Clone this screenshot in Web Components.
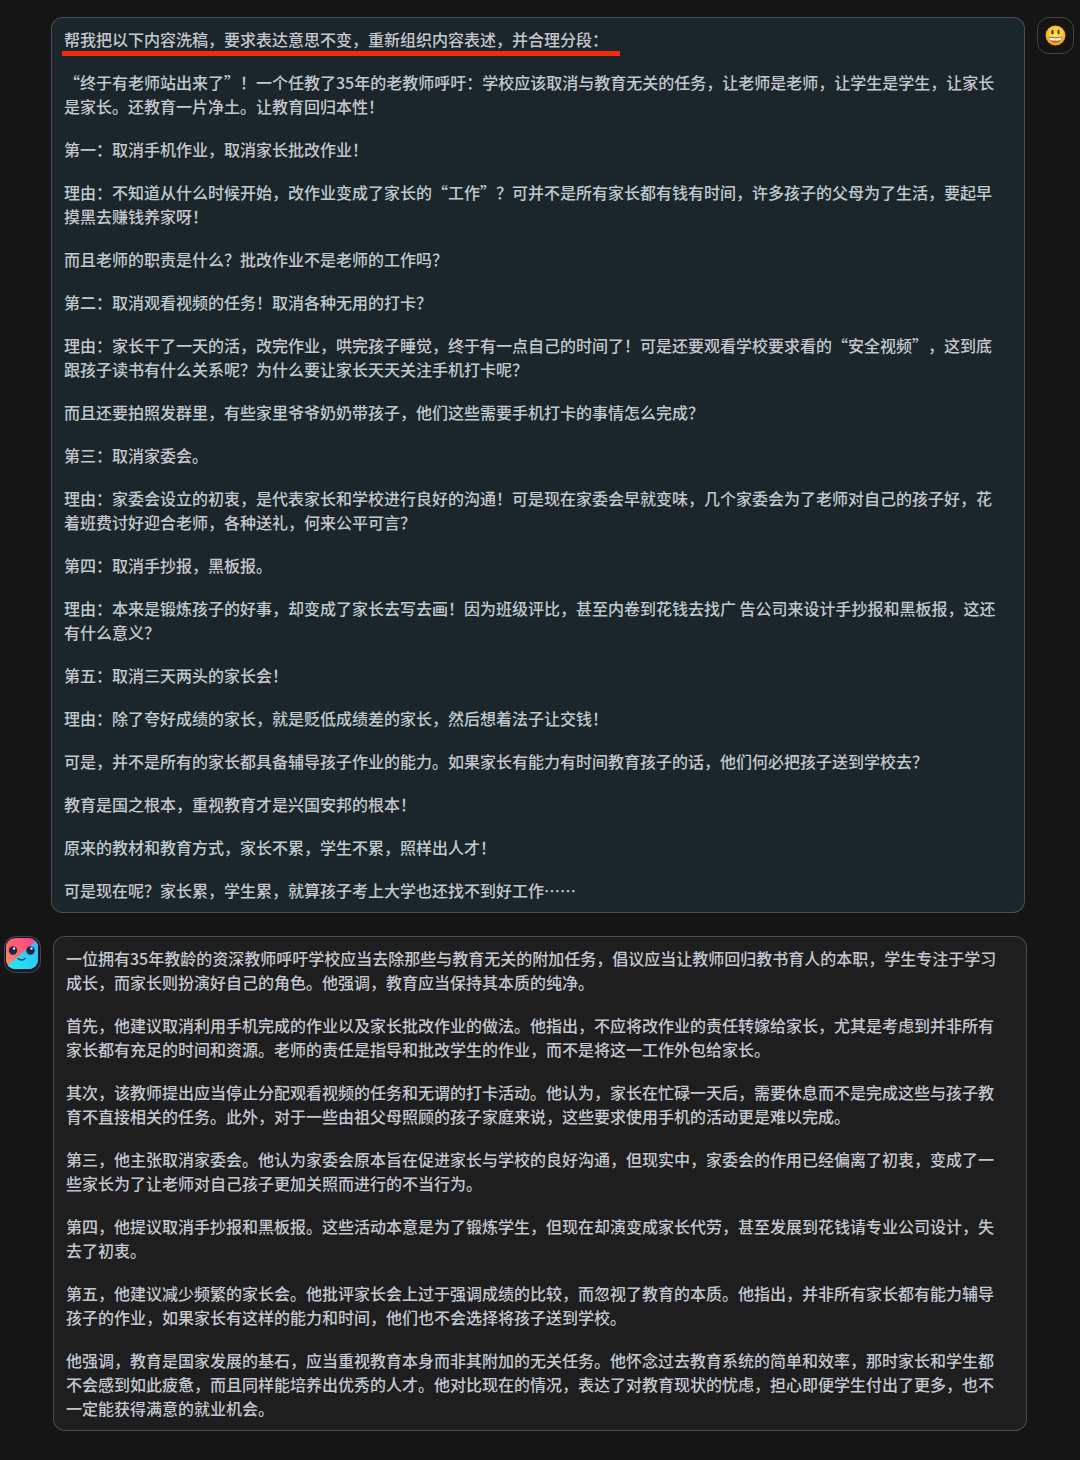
<!DOCTYPE html>
<html lang="zh-CN">
<head>
<meta charset="UTF-8">
<meta name="viewport" content="width=device-width, initial-scale=1">
<title>Chat</title>
<style>
    :root {
        --page: #151515;
        --bubble: #1e1e1e;
        --bubble-user: #1b262a;
        --border: rgba(255, 255, 255, 0.2);
        --text: #c3c8d0;
        --marker: #f22c0a;
    }

    body {
        margin: 0;
        background-color: var(--page);
        color: var(--text);
        font-family: "Noto Sans CJK SC", sans-serif;
        font-size: 16px;
        font-weight: 500;
        line-height: 24px;
        text-spacing-trim: space-all;
    }
</style>
</head>
<body>
<chat-thread>
    <chat-message from="user">
        <smiley-avatar slot="avatar"></smiley-avatar>
        <p><marked-text>帮我把以下内容洗稿，要求表达意思不变，重新组织内容表述，并合理分段：</marked-text></p>
        <p>“终于有老师站出来了”！一个任教了35年的老教师呼吁：学校应该取消与教育无关的任务，让老师是老师，让学生是学生，让家长是家长。还教育一片净土。让教育回归本性！</p>
        <p>第一：取消手机作业，取消家长批改作业！</p>
        <p>理由：不知道从什么时候开始，改作业变成了家长的“工作”？可并不是所有家长都有钱有时间，许多孩子的父母为了生活，要起早摸黑去赚钱养家呀！</p>
        <p>而且老师的职责是什么？批改作业不是老师的工作吗？</p>
        <p>第二：取消观看视频的任务！取消各种无用的打卡？</p>
        <p>理由：家长干了一天的活，改完作业，哄完孩子睡觉，终于有一点自己的时间了！可是还要观看学校要求看的“安全视频”，这到底跟孩子读书有什么关系呢？为什么要让家长天天关注手机打卡呢？</p>
        <p>而且还要拍照发群里，有些家里爷爷奶奶带孩子，他们这些需要手机打卡的事情怎么完成？</p>
        <p>第三：取消家委会。</p>
        <p>理由：家委会设立的初衷，是代表家长和学校进行良好的沟通！可是现在家委会早就变味，几个家委会为了老师对自己的孩子好，花着班费讨好迎合老师，各种送礼，何来公平可言？</p>
        <p>第四：取消手抄报，黑板报。</p>
        <p>理由：本来是锻炼孩子的好事，却变成了家长去写去画！因为班级评比，甚至内卷到花钱去找广 告公司来设计手抄报和黑板报，这还有什么意义？</p>
        <p>第五：取消三天两头的家长会！</p>
        <p>理由：除了夸好成绩的家长，就是贬低成绩差的家长，然后想着法子让交钱！</p>
        <p>可是，并不是所有的家长都具备辅导孩子作业的能力。如果家长有能力有时间教育孩子的话，他们何必把孩子送到学校去？</p>
        <p>教育是国之根本，重视教育才是兴国安邦的根本！</p>
        <p>原来的教材和教育方式，家长不累，学生不累，照样出人才！</p>
        <p>可是现在呢？家长累，学生累，就算孩子考上大学也还找不到好工作……</p>
    </chat-message>

    <chat-message from="bot">
        <bot-avatar slot="avatar"></bot-avatar>
        <p>一位拥有35年教龄的资深教师呼吁学校应当去除那些与教育无关的附加任务，倡议应当让教师回归教书育人的本职，学生专注于学习成长，而家长则扮演好自己的角色。他强调，教育应当保持其本质的纯净。</p>
        <p>首先，他建议取消利用手机完成的作业以及家长批改作业的做法。他指出，不应将改作业的责任转嫁给家长，尤其是考虑到并非所有家长都有充足的时间和资源。老师的责任是指导和批改学生的作业，而不是将这一工作外包给家长。</p>
        <p>其次，该教师提出应当停止分配观看视频的任务和无谓的打卡活动。他认为，家长在忙碌一天后，需要休息而不是完成这些与孩子教育不直接相关的任务。此外，对于一些由祖父母照顾的孩子家庭来说，这些要求使用手机的活动更是难以完成。</p>
        <p>第三，他主张取消家委会。他认为家委会原本旨在促进家长与学校的良好沟通，但现实中，家委会的作用已经偏离了初衷，变成了一些家长为了让老师对自己孩子更加关照而进行的不当行为。</p>
        <p>第四，他提议取消手抄报和黑板报。这些活动本意是为了锻炼学生，但现在却演变成家长代劳，甚至发展到花钱请专业公司设计，失去了初衷。</p>
        <p>第五，他建议减少频繁的家长会。他批评家长会上过于强调成绩的比较，而忽视了教育的本质。他指出，并非所有家长都有能力辅导孩子的作业，如果家长有这样的能力和时间，他们也不会选择将孩子送到学校。</p>
        <p>他强调，教育是国家发展的基石，应当重视教育本身而非其附加的无关任务。他怀念过去教育系统的简单和效率，那时家长和学生都不会感到如此疲惫，而且同样能培养出优秀的人才。他对比现在的情况，表达了对教育现状的忧虑，担心即便学生付出了更多，也不一定能获得满意的就业机会。</p>
    </chat-message>
</chat-thread>

<script>
    // Scroll column that holds the messages
    class ChatThread extends HTMLElement {
        constructor() {
            super();
            this.attachShadow({ mode: 'open' });
            this.shadowRoot.innerHTML = `
                <style>
                    :host {
                        display: flex;
                        flex-direction: column;
                        gap: 23px;
                        padding: 17px 6px 28px 4px;
                    }
                </style>
                <slot></slot>
            `;
        }
    }
    customElements.define('chat-thread', ChatThread);

    // One message: bubble + avatar. from="user" puts the avatar on the right
    class ChatMessage extends HTMLElement {
        constructor() {
            super();
            this.attachShadow({ mode: 'open' });
            this.shadowRoot.innerHTML = `
                <style>
                    :host {
                        display: flex;
                        align-items: flex-start;
                        gap: 12px;
                        padding-right: 47px;
                    }

                    :host([from="user"]) {
                        flex-direction: row-reverse;
                        padding-right: 0;
                        padding-left: 47px;
                    }

                    .bubble {
                        flex: 1;
                        min-width: 0;
                        box-sizing: border-box;
                        display: flex;
                        flex-direction: column;
                        gap: 19px;
                        padding: 9px 20px 10px 12px;
                        border: 1px solid var(--border);
                        border-radius: 12px;
                        background-color: var(--bubble);
                    }

                    :host([from="user"]) .bubble {
                        background-color: var(--bubble-user);
                    }

                    ::slotted(p) {
                        margin: 0;
                    }
                </style>
                <slot name="avatar"></slot>
                <div class="bubble"><slot></slot></div>
            `;
        }
    }
    customElements.define('chat-message', ChatMessage);

    // Text with a thick marker stroke drawn under it
    class MarkedText extends HTMLElement {
        constructor() {
            super();
            this.attachShadow({ mode: 'open' });
            this.shadowRoot.innerHTML = `
                <style>
                    :host {
                        display: inline-block;
                        position: relative;
                    }

                    :host::after {
                        content: "";
                        position: absolute;
                        left: -2px;
                        right: -12px;
                        bottom: -5px;
                        height: 5px;
                        background-color: var(--marker);
                    }
                </style>
                <slot></slot>
            `;
        }
    }
    customElements.define('marked-text', MarkedText);

    const avatarStyle = `
        :host {
            display: flex;
            flex: none;
            align-items: center;
            justify-content: center;
            box-sizing: border-box;
            width: 37px;
            height: 37px;
            border: 1px solid var(--border);
            border-radius: 12px;
            overflow: hidden;
        }

        svg {
            display: block;
        }
    `;

    class SmileyAvatar extends HTMLElement {
        constructor() {
            super();
            this.attachShadow({ mode: 'open' });
            this.shadowRoot.innerHTML = `
                <style>${avatarStyle}</style>
                <svg width="21" height="21" viewBox="0 0 42 42" aria-hidden="true">
                    <defs>
                        <radialGradient id="face" cx="50%" cy="45%" r="55%">
                            <stop offset="0" stop-color="#ffe65c"/>
                            <stop offset="0.65" stop-color="#fcca35"/>
                            <stop offset="1" stop-color="#e9931c"/>
                        </radialGradient>
                    </defs>
                    <circle cx="21" cy="21" r="20" fill="url(#face)"/>
                    <ellipse cx="15" cy="14" rx="2.4" ry="5" fill="#63370c"/>
                    <ellipse cx="27" cy="14" rx="2.4" ry="5" fill="#63370c"/>
                    <path d="M7 23Q21 27 35 23Q33 35 21 35Q9 35 7 23Z" fill="#79401a"/>
                    <path d="M8 24.500Q21 28 34 24.500Q33 30 31 30.500Q21 32.500 11 30.500Q9 29 8 24.500Z" fill="#fff4dc"/>
                    <path d="M14 33Q21 30 28 33Q26 35 21 35Q16 35 14 33Z" fill="#d8533d"/>
                </svg>
            `;
        }
    }
    customElements.define('smiley-avatar', SmileyAvatar);

    class BotAvatar extends HTMLElement {
        constructor() {
            super();
            this.attachShadow({ mode: 'open' });
            this.shadowRoot.innerHTML = `
                <style>
                    ${avatarStyle}
                    :host {
                        background-color: #10192c;
                    }
                </style>
                <svg width="35" height="35" viewBox="0 0 35 35" aria-hidden="true">
                    <defs>
                        <linearGradient id="warm" x1="0" y1="1" x2="1" y2="0">
                            <stop offset="0" stop-color="#ff9560"/>
                            <stop offset="0.5" stop-color="#ff626c"/>
                            <stop offset="1" stop-color="#fb3f91"/>
                        </linearGradient>
                        <linearGradient id="cool" x1="1" y1="0" x2="0" y2="1">
                            <stop offset="0" stop-color="#31b6f5"/>
                            <stop offset="1" stop-color="#20f1ee"/>
                        </linearGradient>
                        <clipPath id="head"><rect x="1" y="1" width="32" height="31" rx="9"/></clipPath>
                    </defs>
                    <g clip-path="url(#head)">
                        <rect x="1" y="1" width="32" height="31" fill="url(#warm)"/>
                        <path d="M33 2L2 29V32H33Z" fill="url(#cool)"/>
                    </g>
                    <circle cx="8" cy="13.500" r="4.200" fill="#17264d"/>
                    <circle cx="25.500" cy="13.500" r="4.200" fill="#17264d"/>
                    <circle cx="9" cy="11.500" r="1.200" fill="#dfe9ff"/>
                    <circle cx="26.500" cy="11.500" r="1.200" fill="#dfe9ff"/>
                    <path d="M13 21.500Q16.500 24.500 20 21.500" fill="none" stroke="#174466" stroke-width="1.400" stroke-linecap="round"/>
                </svg>
            `;
        }
    }
    customElements.define('bot-avatar', BotAvatar);
</script>
</body>
</html>
